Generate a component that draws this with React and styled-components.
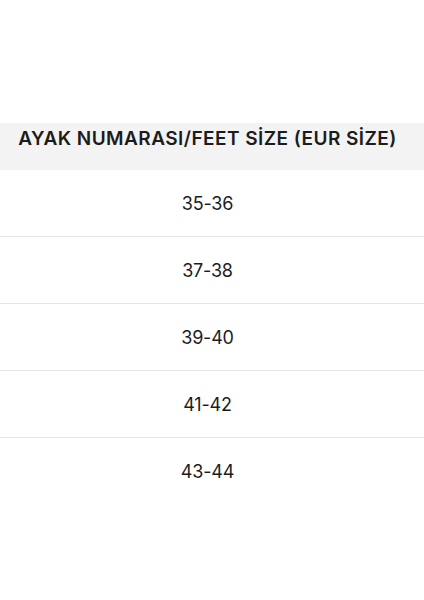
import React from "react";
import styled, { createGlobalStyle } from "styled-components";

const Global = createGlobalStyle`
  html, body { margin: 0; padding: 0; background: #ffffff; }
  body { font-family: Inter, "Noto Sans", sans-serif; color: #1c1c1c; }
`;

const Page = styled.div`
  padding-top: 123px;
  width: 424px;
`;

const Table = styled.div`
  display: flex;
  flex-direction: column;
`;

const HeaderCell = styled.div`
  height: 47px;
  box-sizing: border-box;
  background: #f3f3f3;
  display: flex;
  justify-content: center;
  align-items: flex-start;
  padding: 3px 9px 0 0;
  font-size: 19px;
  font-weight: 600;
  line-height: 26px;
  white-space: nowrap;
  letter-spacing: 0.45px;
`;

const Row = styled.div`
  height: 67px;
  box-sizing: border-box;
  display: flex;
  justify-content: center;
  align-items: center;
  padding-right: 9px;
  font-size: 18px;
  font-weight: 400;
  letter-spacing: -0.2px;
  border-bottom: ${(p) => (p.$last ? "none" : "1.5px solid #e6e6e6")};
`;

const sizes = ["35-36", "37-38", "39-40", "41-42", "43-44"];

export default function App() {
  return (
    <>
      <Global />
      <Page>
        <Table>
          <HeaderCell>AYAK NUMARASI/FEET SİZE (EUR SİZE)</HeaderCell>
          {sizes.map((s, i) => (
            <Row key={s} $last={i === sizes.length - 1}>
              {s}
            </Row>
          ))}
        </Table>
      </Page>
    </>
  );
}
